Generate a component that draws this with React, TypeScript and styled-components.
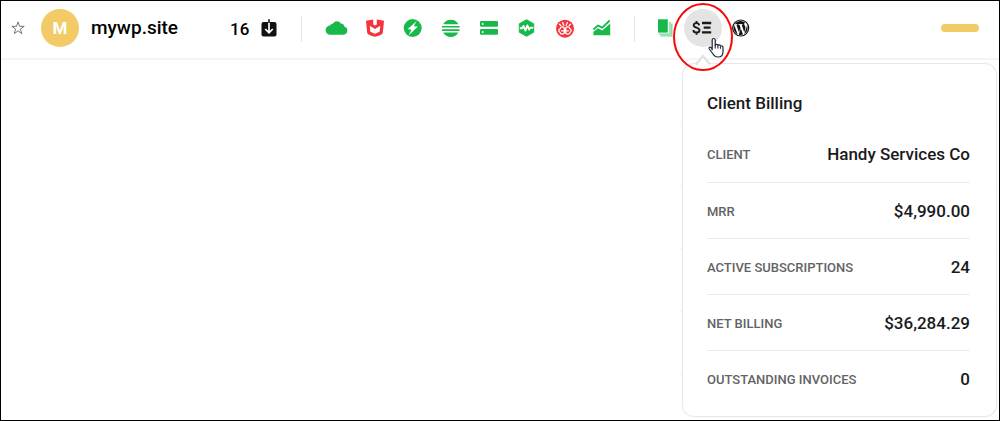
import React from "react";
import styled, { createGlobalStyle } from "styled-components";

const GREEN = "#18b94a";
const RED = "#f5333a";
const INK = "#1a1a1c";
const LINE = "#ececec";

const GlobalStyle = createGlobalStyle`
  *, *::before, *::after { box-sizing: border-box; }
  body {
    margin: 0;
    background: #fff;
    color: ${INK};
    font-family: Roboto, "Liberation Sans", sans-serif;
  }
`;

const Frame = styled.div`
  display: flex;
  flex-direction: column;
  min-height: 100vh;
  border: 1px solid #000;
`;

const Header = styled.header`
  display: flex;
  align-items: center;
  height: 59px;
  padding: 0 20px 4px 7px;
  border-bottom: 2px solid #f4f4f4;
`;

const IconButton = styled.button<{ $active?: boolean; $size?: number }>`
  position: relative;
  display: flex;
  flex: none;
  align-items: center;
  justify-content: center;
  width: ${(p) => p.$size ?? 38}px;
  height: ${(p) => p.$size ?? 38}px;
  padding: 0;
  border: 0;
  border-radius: 50%;
  background: ${(p) => (p.$active ? "#e4e4e4" : "transparent")};
  cursor: pointer;

  svg {
    flex: none;
    display: block;
  }
`;

const Avatar = styled.div`
  display: flex;
  flex: none;
  align-items: center;
  justify-content: center;
  width: 38px;
  height: 38px;
  margin-left: 13px;
  border-radius: 50%;
  background: #f2ca66;
  color: #fff;
  font-size: 17px;
  font-weight: 700;
`;

const SiteName = styled.h1`
  flex: none;
  width: 139px;
  margin: 0 0 0 12px;
  color: #000;
  font-size: 19px;
  line-height: 24px;
  font-weight: 500;
`;

const Count = styled.span`
  flex: none;
  width: 20px;
  margin: 2px 9px 0 0;
  color: #000;
  font-size: 17px;
  line-height: 24px;
  font-weight: 500;
`;

const Divider = styled.span<{ $before: number; $after: number }>`
  flex: none;
  width: 1px;
  height: 26px;
  margin: 2px ${(p) => p.$after}px 0 ${(p) => p.$before}px;
  background: #e6e6e6;
`;

const Tools = styled.nav`
  display: flex;
`;

const StatusPill = styled.span`
  flex: none;
  width: 38px;
  height: 8px;
  margin-left: auto;
  border-radius: 4px;
  background: #f2ca66;
`;

const Highlight = styled.svg`
  position: absolute;
  top: -7px;
  left: -11px;
  z-index: 3;
  pointer-events: none;
`;

const Arrow = styled.svg`
  position: absolute;
  top: 45px;
  left: 10px;
  z-index: 2;
`;

const Cursor = styled.svg`
  position: absolute;
  top: 28px;
  left: 23px;
  z-index: 4;
`;

const Main = styled.main`
  display: grid;
  flex: 1;
  justify-items: end;
`;

const Backdrop = styled.div`
  grid-area: 1 / 1;
  width: 320px;

  span {
    display: block;
    height: 63px;
    border-bottom: 1px solid #f4f4f4;
  }
`;

const Panel = styled.section`
  z-index: 1;
  grid-area: 1 / 1;
  align-self: start;
  width: 315px;
  margin: 3px 2px;
  padding: 24px 26px 10px 24px;
  border: 1px solid #e8e8e8;
  border-radius: 12px;
  background: #fff;
  box-shadow: 0 0 2px rgba(0, 0, 0, 0.06);
`;

const PanelTitle = styled.h2`
  margin: 0 0 8px;
  font-size: 17px;
  line-height: 30px;
  font-weight: 500;
`;

const Facts = styled.dl`
  margin: 0;
`;

const Fact = styled.div`
  display: flex;
  align-items: center;
  justify-content: space-between;
  height: 56px;

  & + & {
    border-top: 1px solid ${LINE};
  }
`;

const Term = styled.dt`
  padding-top: 2px;
  color: #636363;
  font-size: 13px;
  line-height: 20px;
  font-weight: 500;
`;

const Value = styled.dd`
  margin: 0;
  font-size: 17px;
  line-height: 20px;
  font-weight: 500;
`;

type IconProps = { children: React.ReactNode; w?: number; h?: number };
const Icon = ({ children, w = 24, h = 20 }: IconProps) => (
  <svg width={w} height={h} viewBox={`0 0 ${w} ${h}`} fill="none" aria-hidden="true">
    {children}
  </svg>
);

const StarIcon = () => (
  <Icon w={18} h={18}>
    <path d="M9 2.9l1.5 4.4h4.7l-3.8 2.8 1.4 4.5L9 11.9l-3.8 2.7 1.4-4.5-3.8-2.8h4.7z" stroke="#666" strokeWidth="0.9" />
  </Icon>
);

const UpdateIcon = () => (
  <Icon w={18} h={20}>
    <path d="M3.5 4h11A2 2 0 0 1 16.500 6v10.500a2 2 0 0 1-2 2h-11a2 2 0 0 1-2-2V6a2 2 0 0 1 2-2z" fill="#111" />
    <path d="M9 4.500v10M5.200 11L9 14.700l3.800-3.700" stroke="#fff" strokeWidth="1.700" />
    <path d="M9 1.200v3.300" stroke="#111" strokeWidth="1.600" />
  </Icon>
);

const CloudIcon = () => (
  <Icon>
    <path d="M5.600 16.800a4.600 4.600 0 0 1-.8-9.200A4 4 0 0 1 8 5.400a4.700 4.700 0 0 1 7.900.2 3.400 3.400 0 0 1 3.300 2.800A4.300 4.300 0 0 1 18.600 16.800z" fill={GREEN} />
  </Icon>
);

const ShieldIcon = () => (
  <Icon>
    <path d="M3 2.700l7.200-1.200v5L12 7.600l1.800-1.100v-5L21 2.700l-1.200 12c-.3 1.500-2 2.400-7.800 4.100-5.800-1.700-7.500-2.600-7.800-4.100z" fill={RED} />
    <path d="M6.700 7.800L12 11l5.300-3.200-.7 5.900L12 15.800l-4.600-2.100z" fill="#fff" />
  </Icon>
);

const BoltIcon = () => (
  <Icon>
    <circle cx="11.700" cy="10" r="9" fill={GREEN} />
    <path d="M15.700 3L6.600 11.300l3.900.2-2.700 5.700 9.100-8.600-4.200-.3z" fill="#fff" />
  </Icon>
);

const GlobeIcon = () => (
  <Icon>
    <path d="M4.200 6.200a8.700 8.700 0 0 1 15.200 0zM3 7.900h17.600v1.700H3zM3 11.300h17.600V13H3zM4.200 14.600h15.200a8.700 8.700 0 0 1-15.200 0z" fill={GREEN} />
  </Icon>
);

const ServerIcon = () => (
  <Icon>
    <rect x="3" y="3" width="18" height="5.800" rx="1.300" fill={GREEN} />
    <rect x="3" y="11" width="18" height="5.800" rx="1.300" fill={GREEN} />
    <circle cx="5.700" cy="5.900" r="1" fill="#fff" />
    <circle cx="5.700" cy="13.900" r="1" fill="#fff" />
  </Icon>
);

const HealthIcon = () => (
  <Icon>
    <path d="M11.500 1.700l7.200 4.100v8.400l-7.200 4.100-7.200-4.100V5.800z" fill={GREEN} stroke={GREEN} strokeLinejoin="round" />
    <path d="M4.800 10.300h2.300L8.500 8l2 4.500 1.800-5 1.900 4 1.200-1.700h2.900" stroke="#fff" strokeWidth="1.900" strokeLinejoin="round" />
  </Icon>
);

const BrainIcon = () => (
  <Icon>
    <circle cx="12" cy="10.700" r="9" fill={RED} />
    <g stroke="#fff" strokeWidth="1.300" strokeLinecap="round" strokeLinejoin="round">
      <path d="M11.300 10v5.200c-1.300 1.700-4 1-4.200-.7-1.900-1-1.600-3.300.2-3.900.1-1.900 2.900-2.300 4-.6zM12.700 10v5.200c1.300 1.700 4 1 4.200-.7 1.900-1 1.600-3.300-.2-3.900-.1-1.900-2.900-2.300-4-.6z" />
      <path d="M8.600 12.800h2.200M13.200 12.800h2.200M10.800 7.300L9.600 4.600M13.200 7.300l1.200-2.700M7.800 7.500L6.500 6.200M16.200 7.500l1.300-1.300" />
    </g>
  </Icon>
);

const ChartIcon = () => (
  <Icon>
    <path d="M2.400 17.300v-3.500l4.600-3.500 4.200 2.200L19.200 5.500v11.800z" fill={GREEN} />
    <path d="M2.400 11.400l4.600-3.800 4.300 2 7.400-7.100" stroke={GREEN} strokeWidth="1.900" />
  </Icon>
);

const PagesIcon = () => (
  <Icon>
    <path d="M7.500 17.900h11.300V5.600M5.900 16.200h11.100V3.700" stroke="#78d893" strokeWidth="1.300" />
    <path d="M5 1.300h9.800v13.300H5z" fill={GREEN} />
  </Icon>
);

const BillingIcon = () => (
  <Icon>
    <path d="M8.100 7.400C8 5.900 7 5.100 5.500 5.100S2.700 5.900 2.700 7.200C2.700 10.200 8.500 9 8.500 12.200c0 1.500-1.300 2.300-2.900 2.300-1.900 0-3.200-.9-3.200-2.600M5.500 3v2M5.600 14.800v2" stroke={INK} strokeWidth="1.900" />
    <path d="M11 5h9.200M12.700 9.700h6.800M11 14.400h9.200" stroke={INK} strokeWidth="2.300" />
  </Icon>
);

const WordPressIcon = () => (
  <Icon>
    <circle cx="11.700" cy="10" r="8" stroke="#111" strokeWidth="1.200" />
    <g transform="translate(3.540 1.840) scale(0.680)" fill="#111">
      <path d="M1.700 12c0 4.070 2.370 7.600 5.800 9.270L2.580 7.800C2 9.100 1.700 10.500 1.700 12zM18.950 11.480c0-1.270-.46-2.150-.85-2.840-.52-.85-1.010-1.570-1.010-2.420 0-.95.72-1.830 1.730-1.830h.13A10.270 10.270 0 0 0 12 1.700 10.300 10.300 0 0 0 3.400 6.350l.66.020c1.080 0 2.750-.13 2.750-.13.550-.03.620.78.060.85 0 0-.56.070-1.180.1l3.760 11.190 2.260-6.780-1.610-4.410c-.55-.03-1.080-.1-1.080-.1-.56-.03-.49-.88.060-.85 0 0 1.700.13 2.720.13 1.080 0 2.750-.13 2.750-.13.560-.03.620.78.070.85 0 0-.56.070-1.180.1l3.730 11.100 1.030-3.440c.45-1.430.75-2.450.75-3.370zM12.180 12.900l-3.100 9a10.300 10.300 0 0 0 6.350-.16l-.07-.14zM21.060 7.050c.04.33.07.68.07 1.060 0 1.050-.2 2.220-.78 3.700l-3.150 9.100A10.300 10.300 0 0 0 21.060 7.050z" />
    </g>
  </Icon>
);

const tools = [
  { label: "Cloud", icon: <CloudIcon /> },
  { label: "Security", icon: <ShieldIcon /> },
  { label: "Performance", icon: <BoltIcon /> },
  { label: "CDN", icon: <GlobeIcon /> },
  { label: "Hosting", icon: <ServerIcon /> },
  { label: "Uptime", icon: <HealthIcon /> },
  { label: "Optimization", icon: <BrainIcon /> },
  { label: "Analytics", icon: <ChartIcon /> },
];

const billing = [
  ["CLIENT", "Handy Services Co"],
  ["MRR", "$4,990.00"],
  ["ACTIVE SUBSCRIPTIONS", "24"],
  ["NET BILLING", "$36,284.29"],
  ["OUTSTANDING INVOICES", "0"],
];

export default function App() {
  return (
    <Frame>
      <GlobalStyle />
      <Header>
        <IconButton $size={20} aria-label="Favorite"><StarIcon /></IconButton>
        <Avatar>M</Avatar>
        <SiteName>mywp.site</SiteName>
        <Count>16</Count>
        <IconButton $size={20} aria-label="Updates"><UpdateIcon /></IconButton>
        <Divider $before={22} $after={16} />
        <Tools aria-label="Services">
          {tools.map((t) => (
            <IconButton key={t.label} aria-label={t.label}>{t.icon}</IconButton>
          ))}
        </Tools>
        <Divider $before={12} $after={11} />
        <Tools aria-label="Site details">
          <IconButton aria-label="Reports"><PagesIcon /></IconButton>
          <IconButton $active aria-label="Client Billing" aria-expanded="true">
            <BillingIcon />
            <Arrow width="18" height="12" viewBox="0 0 18 12" fill="none" aria-hidden="true">
              <path d="M2 10.500L9 2l7 8.500" fill="#fff" stroke="#e2e2e2" strokeWidth="2.200" />
            </Arrow>
            <Highlight width="60" height="70" viewBox="0 0 60 70" fill="none" aria-hidden="true">
              <ellipse cx="30" cy="35" rx="29" ry="33" stroke="#f80808" strokeWidth="2" />
            </Highlight>
            <Cursor width="18" height="22" viewBox="0 0 18 22" aria-hidden="true">
              <path
                d="M5.200 12.800V3a1.500 1.500 0 0 1 3 0v5.200c.4-1.200 2.500-1.200 2.700.3.600-1 2.400-.7 2.600.6.900-.8 2.500-.1 2.500 1.300v4.300c0 3.200-1.800 5.300-5 5.300-2.600 0-3.800-1-5-3l-3.700-5c-.9-1.500.9-2.500 2-1.400z"
                fill="#fff"
                stroke="#22253a"
                strokeWidth="1.200"
                strokeLinejoin="round"
              />
              <path d="M8.200 8v3.500M10.900 8.800v2.700M13.500 9.500v2.300" stroke="#22253a" strokeWidth="1.100" />
            </Cursor>
          </IconButton>
          <IconButton aria-label="WordPress"><WordPressIcon /></IconButton>
        </Tools>
        <StatusPill />
      </Header>
      <Main>
        <Backdrop aria-hidden="true">
          <span /><span /><span /><span /><span />
        </Backdrop>
        <Panel aria-labelledby="billing-title">
          <PanelTitle id="billing-title">Client Billing</PanelTitle>
          <Facts>
            {billing.map(([term, value]) => (
              <Fact key={term}>
                <Term>{term}</Term>
                <Value>{value}</Value>
              </Fact>
            ))}
          </Facts>
        </Panel>
      </Main>
    </Frame>
  );
}
